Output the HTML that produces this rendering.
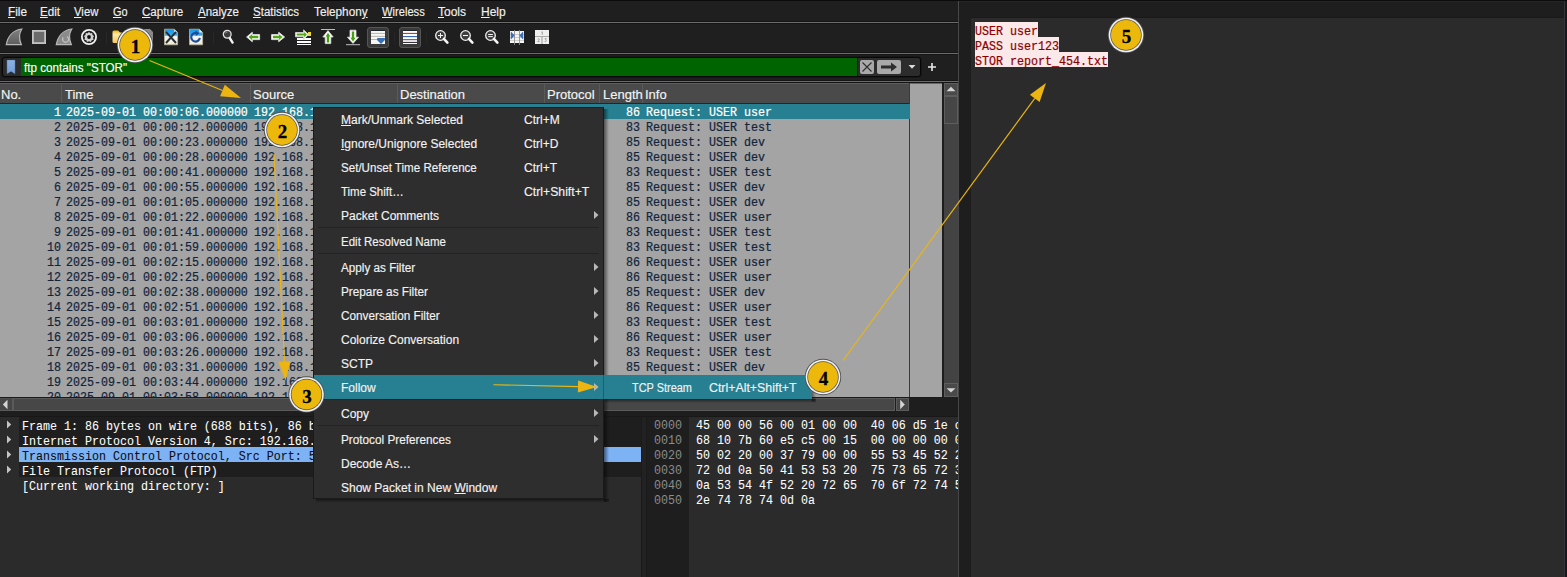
<!DOCTYPE html>
<html><head><meta charset="utf-8">
<style>
*{margin:0;padding:0;box-sizing:border-box}
html,body{width:1567px;height:577px;overflow:hidden;background:#1c1c1c;position:relative}
body{font-family:"Liberation Sans",sans-serif;font-size:12px;color:#fff}
.a{position:absolute}
.mono{font-family:"Liberation Mono",monospace;font-size:11.67px;white-space:pre;line-height:15px;transform:scaleY(1.1);transform-origin:0 0;-webkit-text-stroke:0.2px currentColor}
.ui{font-family:"Liberation Sans",sans-serif;font-size:12px;white-space:pre;line-height:15px;-webkit-text-stroke:0.15px currentColor}
u{text-decoration:underline;text-underline-offset:1px}
</style></head>
<body>

<div class="a" style="left:0px;top:0px;width:1567px;height:1px;background:#0b0b0b;"></div>
<div class="a" style="left:0px;top:1px;width:958px;height:576px;background:#1f1f1f;"></div>
<div class="a" style="left:0px;top:21px;width:958px;height:3px;background:#151515;"></div>
<div class="a" style="left:0px;top:22px;width:958px;height:1px;background:#6c6c6c;"></div>
<div class="a" style="left:0px;top:52px;width:958px;height:3px;background:#151515;"></div>
<div class="a" style="left:0px;top:53px;width:958px;height:1px;background:#6c6c6c;"></div>
<div class="a" style="left:0px;top:80px;width:958px;height:3px;background:#151515;"></div>
<div class="a" style="left:0px;top:81px;width:958px;height:1px;background:#6a6a6a;"></div>
<div class="a ui" style="left:8px;top:5px;color:#f0f0f0;transform:scaleX(0.985);transform-origin:0 0"><u>F</u>ile</div>
<div class="a ui" style="left:40px;top:5px;color:#f0f0f0;transform:scaleX(0.97);transform-origin:0 0"><u>E</u>dit</div>
<div class="a ui" style="left:74px;top:5px;color:#f0f0f0;transform:scaleX(0.945);transform-origin:0 0"><u>V</u>iew</div>
<div class="a ui" style="left:113px;top:5px;color:#f0f0f0;transform:scaleX(0.91);transform-origin:0 0"><u>G</u>o</div>
<div class="a ui" style="left:142px;top:5px;color:#f0f0f0;transform:scaleX(0.965);transform-origin:0 0"><u>C</u>apture</div>
<div class="a ui" style="left:198px;top:5px;color:#f0f0f0;transform:scaleX(0.96);transform-origin:0 0"><u>A</u>nalyze</div>
<div class="a ui" style="left:253px;top:5px;color:#f0f0f0;transform:scaleX(0.96);transform-origin:0 0"><u>S</u>tatistics</div>
<div class="a ui" style="left:314px;top:5px;color:#f0f0f0;transform:scaleX(0.98);transform-origin:0 0">Telephon<u>y</u></div>
<div class="a ui" style="left:382px;top:5px;color:#f0f0f0;transform:scaleX(0.93);transform-origin:0 0"><u>W</u>ireless</div>
<div class="a ui" style="left:438px;top:5px;color:#f0f0f0;transform:scaleX(1.0);transform-origin:0 0"><u>T</u>ools</div>
<div class="a ui" style="left:481px;top:5px;color:#f0f0f0;transform:scaleX(1.0);transform-origin:0 0"><u>H</u>elp</div>
<svg width="0" height="0" style="position:absolute"><defs><linearGradient id="gfin" x1="0" y1="0" x2="0" y2="1"><stop offset="0" stop-color="#808080"/><stop offset="1" stop-color="#5e5e5e"/></linearGradient><linearGradient id="gdoc" x1="0" y1="0" x2="0" y2="1"><stop offset="0" stop-color="#1c98e4"/><stop offset="0.38" stop-color="#38a8ee"/><stop offset="0.47" stop-color="#f4f6f4"/><stop offset="1" stop-color="#f0ecd2"/></linearGradient><linearGradient id="gfold" x1="0" y1="0" x2="0" y2="1"><stop offset="0" stop-color="#f6b400"/><stop offset="0.3" stop-color="#ffe9a8"/><stop offset="1" stop-color="#f8c85a"/></linearGradient><linearGradient id="gbm" x1="0" y1="0" x2="0" y2="1"><stop offset="0" stop-color="#8cb2e4"/><stop offset="1" stop-color="#719dd8"/></linearGradient></defs></svg>
<svg class="a" style="left:5px;top:28px" width="18" height="18" viewBox="0 0 18 18"><path d="M1.3 16.6 C2.8 8.5 8 2 16.8 1 C14.3 5 13.8 11 16.3 16.6 Z" fill="url(#gfin)" stroke="#b9b9b9" stroke-width="1.2"/></svg>
<svg class="a" style="left:31px;top:29px" width="16" height="16" viewBox="0 0 16 16"><rect x="1.9" y="1.9" width="12.2" height="12.2" fill="#6c6c6c" stroke="#c4c4c4" stroke-width="1.8"/></svg>
<svg class="a" style="left:55px;top:28px" width="18" height="18" viewBox="0 0 18 18"><path d="M1.3 16.6 C2.8 8.5 8 2 16.8 1 C14.3 5 13.8 11 16.3 16.6 Z" fill="#8a8a8a" stroke="#b9b9b9" stroke-width="1.2"/><path d="M8.2 9.5 A3 3 0 1 0 12 8.6" fill="none" stroke="#c0c0c0" stroke-width="1.3"/></svg>
<svg class="a" style="left:80px;top:28px" width="18" height="18" viewBox="0 0 18 18"><circle cx="9" cy="9" r="7.1" fill="none" stroke="#f0f0f0" stroke-width="1.8"/><path d="M9 3.8 L10.2 5.3 L12.2 5 L12.5 7 L14 8.1 L13 9.8 L13.6 11.7 L11.7 12.2 L10.8 14 L9 13.2 L7.2 14 L6.3 12.2 L4.4 11.7 L5 9.8 L4 8.1 L5.5 7 L5.8 5 L7.8 5.3 Z" fill="#d2d2d2"/><circle cx="9" cy="9" r="1.9" fill="#111"/></svg>
<div class="a" style="left:106px;top:32px;width:1px;height:12px;background:#282828;"></div>
<svg class="a" style="left:111px;top:29px" width="14" height="16" viewBox="0 0 14 16"><path d="M1.5 3 Q1.5 1.5 3 1.5 L7 1.5 L9 3.5 L11 3.5 L11 14 L3 14 Q1.5 14 1.5 12.5 Z" fill="url(#gfold)"/></svg>
<svg class="a" style="left:138px;top:28px" width="16" height="18" viewBox="0 0 16 18"><path d="M1 1 L12 1 L15 4 L15 17 L1 17 Z" fill="#8a8a8a"/></svg>
<svg class="a" style="left:163px;top:28px" width="16" height="18" viewBox="0 0 16 18"><path d="M1.5 1.2 L11.3 1.2 L14.6 4.5 L14.6 16.8 L1.5 16.8 Z" fill="url(#gdoc)" stroke="#b8b29a" stroke-width="0.8"/><path d="M11.3 1.2 L11.3 4.5 L14.6 4.5 Z" fill="#f4f2e4"/><path d="M3 3.8 L13 15 M13 3.8 L3 15" stroke="#2b3036" stroke-width="2"/></svg>
<svg class="a" style="left:188px;top:28px" width="16" height="18" viewBox="0 0 16 18"><path d="M1.5 1.2 L11.3 1.2 L14.6 4.5 L14.6 16.8 L1.5 16.8 Z" fill="url(#gdoc)" stroke="#b8b29a" stroke-width="0.8"/><path d="M11.3 1.2 L11.3 4.5 L14.6 4.5 Z" fill="#f4f2e4"/><path d="M11.8 9.8 A4.3 4.3 0 1 1 9 5.2" fill="none" stroke="#1d4c9c" stroke-width="2.2"/><path d="M7.5 2.6 L11.6 5.3 L7.8 8 Z" fill="#1d4c9c"/></svg>
<div class="a" style="left:213px;top:32px;width:1px;height:12px;background:#282828;"></div>
<svg class="a" style="left:221px;top:29px" width="16" height="17" viewBox="0 0 16 17"><circle cx="6.2" cy="5.3" r="3.9" fill="#3c3c3c" stroke="#e4e4e4" stroke-width="1.3"/><path d="M6.6 3 A2.2 2.2 0 0 0 4.2 4.6" stroke="#9a9a9a" stroke-width="0.8" fill="none"/><path d="M8.7 9 L11.6 13.6" stroke="#f4f4f4" stroke-width="2.4" stroke-linecap="round"/></svg>
<svg class="a" style="left:245px;top:30px" width="17" height="14" viewBox="0 0 17 14"><path d="M1.6 7 L7.3 2.3 L7.3 4.6 L14.6 4.6 L14.6 9.6 L7.3 9.6 L7.3 11.7 Z" fill="#fff" stroke="#d8d8d8" stroke-width="1"/><path d="M3.6 7 L7 4.2 L7 5.8 L13.3 5.8 L13.3 8.2 L7 8.2 L7 9.9 Z" fill="#50a613"/></svg>
<svg class="a" style="left:270px;top:30px" width="17" height="14" viewBox="0 0 17 14"><path d="M14.6 7 L8.7 2.3 L8.7 4.6 L1.6 4.6 L1.6 9.6 L8.7 9.6 L8.7 11.7 Z" fill="#fff" stroke="#d8d8d8" stroke-width="1"/><path d="M12.6 7 L9 4.2 L9 5.8 L2.9 5.8 L2.9 8.2 L9 8.2 L9 9.9 Z" fill="#50a613"/></svg>
<svg class="a" style="left:294px;top:29px" width="18" height="17" viewBox="0 0 18 17"><rect x="3" y="9" width="14" height="2" fill="#fff"/><rect x="3" y="12" width="14" height="2" fill="#fff"/><rect x="3" y="15" width="14" height="1" fill="#fff"/><rect x="14" y="3" width="3" height="4" fill="#f6d920"/><path d="M14.6 5.6 L9.6 0.9 L9.6 3.5 L1.5 3.5 L1.5 7.8 L9.6 7.8 L9.6 10.3 Z" fill="#fff" stroke="#d0d0d0" stroke-width="0.9"/><path d="M12.9 5.6 L10.2 3 L10.2 4.6 L2.7 4.6 L2.7 6.6 L10.2 6.6 L10.2 8.2 Z" fill="#50a613"/></svg>
<svg class="a" style="left:320px;top:28px" width="16" height="18" viewBox="0 0 16 18"><rect x="1" y="1" width="14" height="1" fill="#bdbdbd"/><path d="M8 2.6 L13.2 9 L10.8 9 L10.8 15.6 L5.2 15.6 L5.2 9 L2.8 9 Z" fill="#fff" stroke="#dcdcdc" stroke-width="0.8"/><path d="M8 4.8 L10.3 8.4 L9.2 8.4 L9.2 14.4 L6.8 14.4 L6.8 8.4 L5.7 8.4 Z" fill="#45a010"/></svg>
<svg class="a" style="left:345px;top:29px" width="16" height="18" viewBox="0 0 16 18"><rect x="1" y="15.2" width="14" height="1" fill="#bdbdbd"/><path d="M8 14.4 L13.6 8.2 L11 8.2 L11 1.2 L5 1.2 L5 8.2 L2.4 8.2 Z" fill="#fff" stroke="#dcdcdc" stroke-width="0.8"/><path d="M8 12.4 L10.6 8.8 L9.2 8.8 L9.2 2.4 L6.8 2.4 L6.8 8.8 L5.4 8.8 Z" fill="#45a010"/></svg>
<div class="a" style="left:367px;top:27px;width:22px;height:21px;background:#3a3a3a;border-radius:3px;border:1px solid #555"></div>
<svg class="a" style="left:371px;top:30px" width="14" height="14" viewBox="0 0 14 14"><rect x="0" y="0" width="14" height="1" fill="#1c262c"/><rect x="0" y="1" width="14" height="13" fill="#f6f6f4"/><rect x="0" y="2.9" width="14" height="0.9" fill="#b0b0a4"/><rect x="0" y="5.9" width="14" height="0.9" fill="#b0b0a4"/><rect x="0" y="9.1" width="14" height="0.9" fill="#b0b0a4"/><path d="M6 8.6 Q6 8 7 8 L13.5 8 Q14 8 14 8.8 L14 10 L10 14 L6 10 Z" fill="#3a6fb6"/></svg>
<div class="a" style="left:394px;top:32px;width:1px;height:12px;background:#252525;"></div>
<div class="a" style="left:399px;top:27px;width:22px;height:21px;background:#3a3a3a;border-radius:3px;border:1px solid #555"></div>
<svg class="a" style="left:403px;top:30px" width="14" height="14" viewBox="0 0 14 14"><rect x="0" y="0" width="14" height="1" fill="#1c262c"/><rect x="0" y="1" width="14" height="13" fill="#fbfbf8"/><rect x="0" y="2.9" width="14" height="1.1" fill="#e82a2a"/><rect x="0" y="6" width="14" height="1.1" fill="#3866b0"/><rect x="0" y="9.1" width="14" height="1.1" fill="#7a4c8e"/><rect x="0" y="11.9" width="14" height="1" fill="#1e2226"/></svg>
<div class="a" style="left:426px;top:32px;width:1px;height:12px;background:#252525;"></div>
<svg class="a" style="left:434px;top:29px" width="17" height="16" viewBox="0 0 17 16"><circle cx="6.5" cy="6.5" r="4.8" fill="#3c3c3c" stroke="#f0f0f0" stroke-width="1.3"/><path d="M9.9 9.9 L13.4 13.6" stroke="#f6f6f6" stroke-width="2.6" stroke-linecap="round"/><path d="M6.5 4 V9 M4 6.5 H9" stroke="#f4f4f4" stroke-width="1"/></svg>
<svg class="a" style="left:459px;top:29px" width="17" height="16" viewBox="0 0 17 16"><circle cx="6.5" cy="6.5" r="4.8" fill="#3c3c3c" stroke="#f0f0f0" stroke-width="1.3"/><path d="M9.9 9.9 L13.4 13.6" stroke="#f6f6f6" stroke-width="2.6" stroke-linecap="round"/><path d="M4 6.5 H9" stroke="#f4f4f4" stroke-width="1.1"/></svg>
<svg class="a" style="left:484px;top:29px" width="17" height="16" viewBox="0 0 17 16"><circle cx="6.5" cy="6.5" r="4.8" fill="#3c3c3c" stroke="#f0f0f0" stroke-width="1.3"/><path d="M9.9 9.9 L13.4 13.6" stroke="#f6f6f6" stroke-width="2.6" stroke-linecap="round"/><path d="M4.2 5.5 H8.8 M4.2 7.6 H8.8" stroke="#f4f4f4" stroke-width="1"/></svg>
<svg class="a" style="left:509px;top:29px" width="16" height="16" viewBox="0 0 16 16"><rect x="1" y="2" width="14" height="12" fill="#f4f4f4"/><path d="M1 5.5 H15 M1 8.5 H15 M1 11.5 H15" stroke="#c4c4bc" stroke-width="0.8"/><path d="M5.5 1 V16 M10.5 1 V16" stroke="#8e8e8e" stroke-width="0.9"/><path d="M1.8 3 Q1.8 2.6 2.4 2.9 L5.6 6.5 L2.4 10.1 Q1.8 10.4 1.8 10 Z M14.2 3 Q14.2 2.6 13.6 2.9 L10.4 6.5 L13.6 10.1 Q14.2 10.4 14.2 10 Z" fill="#3a6ebc"/></svg>
<svg class="a" style="left:534px;top:29px" width="16" height="16" viewBox="0 0 16 16"><rect x="1" y="1" width="14" height="14" fill="#f0f0f0"/><path d="M1 7.5 H15 M8 7.5 V15" stroke="#a8a8a4" stroke-width="1.2"/><path d="M7.6 3.2 L8.3 2.8 L8.3 5.8" stroke="#7a7a7a" stroke-width="0.7" fill="none"/><path d="M3.6 10.3 Q4.6 9.3 5.4 10.2 Q5.4 11 3.6 12.6 L5.6 12.6" stroke="#8a8a8a" stroke-width="0.7" fill="none"/><path d="M10.6 9.6 L12.4 9.6 L11.4 10.8 Q12.6 11 12.2 12.2 Q11.6 13 10.6 12.4" stroke="#8a8a8a" stroke-width="0.7" fill="none"/></svg>
<div class="a" style="left:2px;top:57px;width:919px;height:20px;background:#2c2c2c;border:1px solid #080808;border-radius:3px;box-shadow:0 0 0 0.5px #111"></div>
<div class="a" style="left:21px;top:58px;width:836px;height:18px;background:#006400;"></div>
<div class="a" style="left:857px;top:58px;width:1px;height:18px;background:#111;"></div>
<svg class="a" style="left:6px;top:59px" width="12" height="16" viewBox="0 0 12 16"><path d="M0.9 0.9 L9.1 0.9 L9.1 15 L5 12.6 L0.9 15 Z" fill="url(#gbm)" stroke="#3a4a5a" stroke-width="0.3"/></svg>
<div class="a ui" style="left:24px;top:61px;color:#ffffff;transform:scaleX(0.97);transform-origin:0 0">ftp contains "STOR"</div>
<div class="a" style="left:860px;top:60px;width:14px;height:14px;background:#a9a9a9;border-radius:2px"></div>
<svg class="a" style="left:860px;top:60px" width="14" height="14" viewBox="0 0 14 14"><path d="M2.5 2.5 L11.5 11.5 M11.5 2.5 L2.5 11.5" stroke="#2e2e2e" stroke-width="1.1"/></svg>
<div class="a" style="left:877px;top:60px;width:24px;height:14px;background:#a9a9a9;border-radius:2px"></div>
<svg class="a" style="left:877px;top:60px" width="24" height="14" viewBox="0 0 24 14"><path d="M4 5.5 L14 5.5 L14 2.5 L20 7 L14 11.5 L14 8.5 L4 8.5 Z" fill="#2e2e2e"/></svg>
<svg class="a" style="left:906px;top:62px" width="12" height="8" viewBox="0 0 12 8"><path d="M2.5 3 L9.5 3 L6 6.8 Z" fill="#dddddd"/></svg>
<svg class="a" style="left:926px;top:61px" width="12" height="12" viewBox="0 0 12 12"><path d="M6 2 V10 M2 6 H10" stroke="#e8e8e8" stroke-width="1.6"/></svg>
<div class="a" style="left:0px;top:83px;width:910px;height:20px;background:#4a4a4a;"></div>
<div class="a" style="left:0px;top:83px;width:910px;height:1px;background:#5e5e5e;"></div>
<div class="a" style="left:0px;top:103px;width:910px;height:1px;background:#262626;"></div>
<div class="a" style="left:0px;top:104px;width:943px;height:293px;background:#a4a4a4;"></div>
<div class="a" style="left:910px;top:83px;width:33px;height:21px;background:#a4a4a4;"></div>
<div class="a" style="left:910px;top:83px;width:33px;height:1px;background:#268092;"></div>
<div class="a" style="left:909px;top:83px;width:1px;height:314px;background:#3a3a3a;"></div>
<div class="a" style="left:61px;top:83px;width:1px;height:20px;background:#5a5a5a;"></div>
<div class="a" style="left:250px;top:83px;width:1px;height:20px;background:#5a5a5a;"></div>
<div class="a" style="left:397px;top:83px;width:1px;height:20px;background:#5a5a5a;"></div>
<div class="a" style="left:544px;top:83px;width:1px;height:20px;background:#5a5a5a;"></div>
<div class="a" style="left:599px;top:83px;width:1px;height:20px;background:#5a5a5a;"></div>
<div class="a" style="left:642px;top:83px;width:1px;height:20px;background:#5a5a5a;"></div>
<div class="a ui" style="left:1px;top:87px;color:#f4f4f4;font-size:13px">No.</div>
<div class="a ui" style="left:65px;top:87px;color:#f4f4f4;font-size:13px">Time</div>
<div class="a ui" style="left:253px;top:87px;color:#f4f4f4;font-size:13px">Source</div>
<div class="a ui" style="left:400px;top:87px;color:#f4f4f4;font-size:13px">Destination</div>
<div class="a ui" style="left:547px;top:87px;color:#f4f4f4;font-size:13px">Protocol</div>
<div class="a ui" style="left:603px;top:87px;color:#f4f4f4;font-size:13px">Length</div>
<div class="a ui" style="left:645px;top:87px;color:#f4f4f4;font-size:13px">Info</div>
<div class="a" style="left:0px;top:104px;width:910px;height:15px;background:#268092;"></div>
<div class="a" style="left:0;top:104px;width:909px;height:293px;overflow:hidden">
<div class="a mono" style="left:54px;top:1px;color:#ffffff">1</div>
<div class="a mono" style="left:66px;top:1px;color:#ffffff">2025-09-01 00:00:06.000000</div>
<div class="a mono" style="left:254px;top:1px;color:#ffffff">192.168.1.10</div>
<div class="a mono" style="left:401px;top:1px;color:#ffffff">192.168.1.20</div>
<div class="a mono" style="left:548px;top:1px;color:#ffffff">FTP</div>
<div class="a mono" style="left:626px;top:1px;color:#ffffff">86</div>
<div class="a mono" style="left:646px;top:1px;color:#ffffff">Request: USER user</div>
<div class="a mono" style="left:54px;top:16px;color:#12233a">2</div>
<div class="a mono" style="left:66px;top:16px;color:#12233a">2025-09-01 00:00:12.000000</div>
<div class="a mono" style="left:254px;top:16px;color:#12233a">192.168.1.10</div>
<div class="a mono" style="left:401px;top:16px;color:#12233a">192.168.1.20</div>
<div class="a mono" style="left:548px;top:16px;color:#12233a">FTP</div>
<div class="a mono" style="left:626px;top:16px;color:#12233a">83</div>
<div class="a mono" style="left:646px;top:16px;color:#12233a">Request: USER test</div>
<div class="a mono" style="left:54px;top:31px;color:#12233a">3</div>
<div class="a mono" style="left:66px;top:31px;color:#12233a">2025-09-01 00:00:23.000000</div>
<div class="a mono" style="left:254px;top:31px;color:#12233a">192.168.1.10</div>
<div class="a mono" style="left:401px;top:31px;color:#12233a">192.168.1.20</div>
<div class="a mono" style="left:548px;top:31px;color:#12233a">FTP</div>
<div class="a mono" style="left:626px;top:31px;color:#12233a">85</div>
<div class="a mono" style="left:646px;top:31px;color:#12233a">Request: USER dev</div>
<div class="a mono" style="left:54px;top:46px;color:#12233a">4</div>
<div class="a mono" style="left:66px;top:46px;color:#12233a">2025-09-01 00:00:28.000000</div>
<div class="a mono" style="left:254px;top:46px;color:#12233a">192.168.1.10</div>
<div class="a mono" style="left:401px;top:46px;color:#12233a">192.168.1.20</div>
<div class="a mono" style="left:548px;top:46px;color:#12233a">FTP</div>
<div class="a mono" style="left:626px;top:46px;color:#12233a">85</div>
<div class="a mono" style="left:646px;top:46px;color:#12233a">Request: USER dev</div>
<div class="a mono" style="left:54px;top:61px;color:#12233a">5</div>
<div class="a mono" style="left:66px;top:61px;color:#12233a">2025-09-01 00:00:41.000000</div>
<div class="a mono" style="left:254px;top:61px;color:#12233a">192.168.1.10</div>
<div class="a mono" style="left:401px;top:61px;color:#12233a">192.168.1.20</div>
<div class="a mono" style="left:548px;top:61px;color:#12233a">FTP</div>
<div class="a mono" style="left:626px;top:61px;color:#12233a">83</div>
<div class="a mono" style="left:646px;top:61px;color:#12233a">Request: USER test</div>
<div class="a mono" style="left:54px;top:76px;color:#12233a">6</div>
<div class="a mono" style="left:66px;top:76px;color:#12233a">2025-09-01 00:00:55.000000</div>
<div class="a mono" style="left:254px;top:76px;color:#12233a">192.168.1.10</div>
<div class="a mono" style="left:401px;top:76px;color:#12233a">192.168.1.20</div>
<div class="a mono" style="left:548px;top:76px;color:#12233a">FTP</div>
<div class="a mono" style="left:626px;top:76px;color:#12233a">85</div>
<div class="a mono" style="left:646px;top:76px;color:#12233a">Request: USER dev</div>
<div class="a mono" style="left:54px;top:91px;color:#12233a">7</div>
<div class="a mono" style="left:66px;top:91px;color:#12233a">2025-09-01 00:01:05.000000</div>
<div class="a mono" style="left:254px;top:91px;color:#12233a">192.168.1.10</div>
<div class="a mono" style="left:401px;top:91px;color:#12233a">192.168.1.20</div>
<div class="a mono" style="left:548px;top:91px;color:#12233a">FTP</div>
<div class="a mono" style="left:626px;top:91px;color:#12233a">85</div>
<div class="a mono" style="left:646px;top:91px;color:#12233a">Request: USER dev</div>
<div class="a mono" style="left:54px;top:106px;color:#12233a">8</div>
<div class="a mono" style="left:66px;top:106px;color:#12233a">2025-09-01 00:01:22.000000</div>
<div class="a mono" style="left:254px;top:106px;color:#12233a">192.168.1.10</div>
<div class="a mono" style="left:401px;top:106px;color:#12233a">192.168.1.20</div>
<div class="a mono" style="left:548px;top:106px;color:#12233a">FTP</div>
<div class="a mono" style="left:626px;top:106px;color:#12233a">86</div>
<div class="a mono" style="left:646px;top:106px;color:#12233a">Request: USER user</div>
<div class="a mono" style="left:54px;top:121px;color:#12233a">9</div>
<div class="a mono" style="left:66px;top:121px;color:#12233a">2025-09-01 00:01:41.000000</div>
<div class="a mono" style="left:254px;top:121px;color:#12233a">192.168.1.10</div>
<div class="a mono" style="left:401px;top:121px;color:#12233a">192.168.1.20</div>
<div class="a mono" style="left:548px;top:121px;color:#12233a">FTP</div>
<div class="a mono" style="left:626px;top:121px;color:#12233a">83</div>
<div class="a mono" style="left:646px;top:121px;color:#12233a">Request: USER test</div>
<div class="a mono" style="left:47px;top:136px;color:#12233a">10</div>
<div class="a mono" style="left:66px;top:136px;color:#12233a">2025-09-01 00:01:59.000000</div>
<div class="a mono" style="left:254px;top:136px;color:#12233a">192.168.1.10</div>
<div class="a mono" style="left:401px;top:136px;color:#12233a">192.168.1.20</div>
<div class="a mono" style="left:548px;top:136px;color:#12233a">FTP</div>
<div class="a mono" style="left:626px;top:136px;color:#12233a">83</div>
<div class="a mono" style="left:646px;top:136px;color:#12233a">Request: USER test</div>
<div class="a mono" style="left:47px;top:151px;color:#12233a">11</div>
<div class="a mono" style="left:66px;top:151px;color:#12233a">2025-09-01 00:02:15.000000</div>
<div class="a mono" style="left:254px;top:151px;color:#12233a">192.168.1.10</div>
<div class="a mono" style="left:401px;top:151px;color:#12233a">192.168.1.20</div>
<div class="a mono" style="left:548px;top:151px;color:#12233a">FTP</div>
<div class="a mono" style="left:626px;top:151px;color:#12233a">86</div>
<div class="a mono" style="left:646px;top:151px;color:#12233a">Request: USER user</div>
<div class="a mono" style="left:47px;top:166px;color:#12233a">12</div>
<div class="a mono" style="left:66px;top:166px;color:#12233a">2025-09-01 00:02:25.000000</div>
<div class="a mono" style="left:254px;top:166px;color:#12233a">192.168.1.10</div>
<div class="a mono" style="left:401px;top:166px;color:#12233a">192.168.1.20</div>
<div class="a mono" style="left:548px;top:166px;color:#12233a">FTP</div>
<div class="a mono" style="left:626px;top:166px;color:#12233a">86</div>
<div class="a mono" style="left:646px;top:166px;color:#12233a">Request: USER user</div>
<div class="a mono" style="left:47px;top:181px;color:#12233a">13</div>
<div class="a mono" style="left:66px;top:181px;color:#12233a">2025-09-01 00:02:38.000000</div>
<div class="a mono" style="left:254px;top:181px;color:#12233a">192.168.1.10</div>
<div class="a mono" style="left:401px;top:181px;color:#12233a">192.168.1.20</div>
<div class="a mono" style="left:548px;top:181px;color:#12233a">FTP</div>
<div class="a mono" style="left:626px;top:181px;color:#12233a">85</div>
<div class="a mono" style="left:646px;top:181px;color:#12233a">Request: USER dev</div>
<div class="a mono" style="left:47px;top:196px;color:#12233a">14</div>
<div class="a mono" style="left:66px;top:196px;color:#12233a">2025-09-01 00:02:51.000000</div>
<div class="a mono" style="left:254px;top:196px;color:#12233a">192.168.1.10</div>
<div class="a mono" style="left:401px;top:196px;color:#12233a">192.168.1.20</div>
<div class="a mono" style="left:548px;top:196px;color:#12233a">FTP</div>
<div class="a mono" style="left:626px;top:196px;color:#12233a">86</div>
<div class="a mono" style="left:646px;top:196px;color:#12233a">Request: USER user</div>
<div class="a mono" style="left:47px;top:211px;color:#12233a">15</div>
<div class="a mono" style="left:66px;top:211px;color:#12233a">2025-09-01 00:03:01.000000</div>
<div class="a mono" style="left:254px;top:211px;color:#12233a">192.168.1.10</div>
<div class="a mono" style="left:401px;top:211px;color:#12233a">192.168.1.20</div>
<div class="a mono" style="left:548px;top:211px;color:#12233a">FTP</div>
<div class="a mono" style="left:626px;top:211px;color:#12233a">83</div>
<div class="a mono" style="left:646px;top:211px;color:#12233a">Request: USER test</div>
<div class="a mono" style="left:47px;top:226px;color:#12233a">16</div>
<div class="a mono" style="left:66px;top:226px;color:#12233a">2025-09-01 00:03:06.000000</div>
<div class="a mono" style="left:254px;top:226px;color:#12233a">192.168.1.10</div>
<div class="a mono" style="left:401px;top:226px;color:#12233a">192.168.1.20</div>
<div class="a mono" style="left:548px;top:226px;color:#12233a">FTP</div>
<div class="a mono" style="left:626px;top:226px;color:#12233a">86</div>
<div class="a mono" style="left:646px;top:226px;color:#12233a">Request: USER user</div>
<div class="a mono" style="left:47px;top:241px;color:#12233a">17</div>
<div class="a mono" style="left:66px;top:241px;color:#12233a">2025-09-01 00:03:26.000000</div>
<div class="a mono" style="left:254px;top:241px;color:#12233a">192.168.1.10</div>
<div class="a mono" style="left:401px;top:241px;color:#12233a">192.168.1.20</div>
<div class="a mono" style="left:548px;top:241px;color:#12233a">FTP</div>
<div class="a mono" style="left:626px;top:241px;color:#12233a">83</div>
<div class="a mono" style="left:646px;top:241px;color:#12233a">Request: USER test</div>
<div class="a mono" style="left:47px;top:256px;color:#12233a">18</div>
<div class="a mono" style="left:66px;top:256px;color:#12233a">2025-09-01 00:03:31.000000</div>
<div class="a mono" style="left:254px;top:256px;color:#12233a">192.168.1.10</div>
<div class="a mono" style="left:401px;top:256px;color:#12233a">192.168.1.20</div>
<div class="a mono" style="left:548px;top:256px;color:#12233a">FTP</div>
<div class="a mono" style="left:626px;top:256px;color:#12233a">85</div>
<div class="a mono" style="left:646px;top:256px;color:#12233a">Request: USER dev</div>
<div class="a mono" style="left:47px;top:271px;color:#12233a">19</div>
<div class="a mono" style="left:66px;top:271px;color:#12233a">2025-09-01 00:03:44.000000</div>
<div class="a mono" style="left:254px;top:271px;color:#12233a">192.168.1.10</div>
<div class="a mono" style="left:401px;top:271px;color:#12233a">192.168.1.20</div>
<div class="a mono" style="left:548px;top:271px;color:#12233a">FTP</div>
<div class="a mono" style="left:626px;top:271px;color:#12233a">86</div>
<div class="a mono" style="left:646px;top:271px;color:#12233a">Request: USER user</div>
<div class="a mono" style="left:47px;top:286px;color:#12233a">20</div>
<div class="a mono" style="left:66px;top:286px;color:#12233a">2025-09-01 00:03:58.000000</div>
<div class="a mono" style="left:254px;top:286px;color:#12233a">192.168.1.10</div>
<div class="a mono" style="left:401px;top:286px;color:#12233a">192.168.1.20</div>
<div class="a mono" style="left:548px;top:286px;color:#12233a">FTP</div>
<div class="a mono" style="left:626px;top:286px;color:#12233a">86</div>
<div class="a mono" style="left:646px;top:286px;color:#12233a">Request: USER user</div>
</div>
<div class="a" style="left:942px;top:83px;width:16px;height:314px;background:#434343;"></div>
<div class="a" style="left:942px;top:83px;width:2px;height:314px;background:#1e1e1e;"></div>
<div class="a" style="left:944px;top:83px;width:14px;height:13px;background:#4a4a4a;border:1px solid #5e5e5e"></div>
<div class="a" style="left:944px;top:96px;width:14px;height:28px;background:#464646;border:1px solid #5e5e5e"></div>
<div class="a" style="left:944px;top:383px;width:14px;height:14px;background:#4a4a4a;border:1px solid #5e5e5e"></div>
<svg class="a" style="left:944px;top:83px" width="14" height="13"><path d="M2.5 8.2 L7 3.8 L11.5 8.2 Z" fill="#d4d4d4"/></svg>
<svg class="a" style="left:944px;top:383px" width="14" height="14"><path d="M2.5 5.2 L7 9.6 L11.5 5.2 Z" fill="#d4d4d4"/></svg>
<div class="a" style="left:0px;top:397px;width:958px;height:20px;background:#1e1e1e;"></div>
<div class="a" style="left:0px;top:397px;width:943px;height:1px;background:#1a1a1a;"></div>
<div class="a" style="left:0px;top:398px;width:13px;height:13px;background:#464646;border:1px solid #5a5a5a;border-left:none;border-top-color:#4e4e4e"></div>
<div class="a" style="left:13px;top:398px;width:882px;height:13px;background:#474747;border:1px solid #5a5a5a"></div>
<div class="a" style="left:896px;top:398px;width:13px;height:13px;background:#474747;border:1px solid #5c5c5c"></div>
<svg class="a" style="left:0px;top:398px" width="13" height="13"><path d="M7.5 1.8 L2.8 6.5 L7.5 11.2 Z" fill="#d4d4d4"/></svg>
<svg class="a" style="left:896px;top:398px" width="14" height="13"><path d="M4.2 1.8 L8.8 6.5 L4.2 11.2 Z" fill="#d4d4d4"/></svg>
<div class="a" style="left:0px;top:416px;width:958px;height:1px;background:#181818;"></div>
<div class="a" style="left:0px;top:417px;width:641px;height:160px;background:#2b2b2b;"></div>
<div class="a" style="left:19px;top:417px;width:622px;height:60px;background:#1e1e1e;"></div>
<div class="a" style="left:19px;top:447px;width:622px;height:15px;background:#7db2f5;"></div>
<div class="a" style="left:0;top:417px;width:641px;height:160px;overflow:hidden">
<div class="a mono" style="left:22px;top:1.5px;color:#ffffff;-webkit-text-stroke:0.05px #ffffff">Frame 1: 86 bytes on wire (688 bits), 86 bytes captured (688 bits) on interface</div>
<svg class="a" style="left:0px;top:0px" width="12" height="15"><path d="M7 3.6 L11.2 7.5 L7 11.4 Z" fill="#c4c4c4"/></svg>
<div class="a mono" style="left:22px;top:16.5px;color:#ffffff;-webkit-text-stroke:0.05px #ffffff">Internet Protocol Version 4, Src: 192.168.1.10, Dst: 192.168.1.20</div>
<svg class="a" style="left:0px;top:15px" width="12" height="15"><path d="M7 3.6 L11.2 7.5 L7 11.4 Z" fill="#c4c4c4"/></svg>
<div class="a mono" style="left:22px;top:31.5px;color:#0b0b0b;-webkit-text-stroke:0.05px #0b0b0b">Transmission Control Protocol, Src Port: 50001, Dst Port: 21, Seq: 1</div>
<svg class="a" style="left:0px;top:30px" width="12" height="15"><path d="M7 3.6 L11.2 7.5 L7 11.4 Z" fill="#c4c4c4"/></svg>
<div class="a mono" style="left:22px;top:46.5px;color:#ffffff;-webkit-text-stroke:0.05px #ffffff">File Transfer Protocol (FTP)</div>
<svg class="a" style="left:0px;top:45px" width="12" height="15"><path d="M7 3.6 L11.2 7.5 L7 11.4 Z" fill="#c4c4c4"/></svg>
<div class="a mono" style="left:22px;top:61.5px;color:#ffffff;-webkit-text-stroke:0.05px #ffffff">[Current working directory: ]</div>
</div>
<div class="a" style="left:641px;top:417px;width:6px;height:160px;background:#222222;"></div>
<div class="a" style="left:641px;top:417px;width:1px;height:160px;background:#1a1a1a;"></div>
<div class="a" style="left:646px;top:417px;width:1px;height:160px;background:#1a1a1a;"></div>
<div class="a" style="left:647px;top:417px;width:42px;height:160px;background:#1e1e1e;"></div>
<div class="a" style="left:689px;top:417px;width:269px;height:160px;background:#2b2b2b;"></div>
<div class="a" style="left:647px;top:417px;width:311px;height:160px;overflow:hidden">
<div class="a mono" style="left:7px;top:1px;color:#8c8c8c;-webkit-text-stroke:0">0000</div>
<div class="a mono" style="left:49px;top:1px;color:#ffffff;-webkit-text-stroke:0.05px #fff">45 00 00 56 00 01 00 00  40 06 d5 1e c0 a8 01 0a</div>
<div class="a mono" style="left:7px;top:16px;color:#8c8c8c;-webkit-text-stroke:0">0010</div>
<div class="a mono" style="left:49px;top:16px;color:#ffffff;-webkit-text-stroke:0.05px #fff">68 10 7b 60 e5 c5 00 15  00 00 00 00 00 00 00 00</div>
<div class="a mono" style="left:7px;top:31px;color:#8c8c8c;-webkit-text-stroke:0">0020</div>
<div class="a mono" style="left:49px;top:31px;color:#ffffff;-webkit-text-stroke:0.05px #fff">50 02 20 00 37 79 00 00  55 53 45 52 20 75 73 65</div>
<div class="a mono" style="left:7px;top:46px;color:#8c8c8c;-webkit-text-stroke:0">0030</div>
<div class="a mono" style="left:49px;top:46px;color:#ffffff;-webkit-text-stroke:0.05px #fff">72 0d 0a 50 41 53 53 20  75 73 65 72 31 32 33 0d</div>
<div class="a mono" style="left:7px;top:61px;color:#8c8c8c;-webkit-text-stroke:0">0040</div>
<div class="a mono" style="left:49px;top:61px;color:#ffffff;-webkit-text-stroke:0.05px #fff">0a 53 54 4f 52 20 72 65  70 6f 72 74 5f 34 35 34</div>
<div class="a mono" style="left:7px;top:76px;color:#8c8c8c;-webkit-text-stroke:0">0050</div>
<div class="a mono" style="left:49px;top:76px;color:#ffffff;-webkit-text-stroke:0.05px #fff">2e 74 78 74 0d 0a</div>
</div>
<div class="a" style="left:958px;top:1px;width:1px;height:576px;background:#474747;"></div>
<div class="a" style="left:959px;top:1px;width:608px;height:576px;background:#1e1e1e;"></div>
<div class="a" style="left:971px;top:17px;width:593px;height:560px;background:#2b2b2b;"></div>
<div class="a" style="left:971px;top:17px;width:593px;height:1px;background:#1a1a1a;"></div>
<div class="a" style="left:959px;top:1px;width:608px;height:1px;background:#242424;"></div>
<div class="a" style="left:975px;top:22px;width:63px;height:15px;background:#fbe9ea;"></div>
<div class="a mono" style="left:975px;top:24px;color:#8b0000">USER user</div>
<div class="a" style="left:975px;top:37px;width:84px;height:15px;background:#fbe9ea;"></div>
<div class="a mono" style="left:975px;top:39px;color:#8b0000">PASS user123</div>
<div class="a" style="left:975px;top:52px;width:133px;height:15px;background:#fbe9ea;"></div>
<div class="a mono" style="left:975px;top:54px;color:#8b0000">STOR report_454.txt</div>
<div class="a" style="left:1564px;top:1px;width:3px;height:576px;background:#181818;"></div>
<div class="a" style="left:1564px;top:1px;width:1px;height:576px;background:#36363a;"></div>
<div class="a" style="left:604px;top:109px;width:5px;height:393px;background:linear-gradient(to right,rgba(0,0,0,0.5),rgba(0,0,0,0));"></div>
<div class="a" style="left:316px;top:499px;width:293px;height:4px;background:linear-gradient(to bottom,rgba(0,0,0,0.45),rgba(0,0,0,0));"></div>
<div class="a" style="left:313px;top:107px;width:291px;height:392px;background:#2e2e2e;border:1px solid #1a1a1a"></div>
<div class="a ui" style="left:341px;top:113px;color:#f2f2f2;"><u>M</u>ark/Unmark Selected</div>
<div class="a ui" style="left:524px;top:113px;color:#f2f2f2;">Ctrl+M</div>
<div class="a ui" style="left:341px;top:137px;color:#f2f2f2;"><u>I</u>gnore/Unignore Selected</div>
<div class="a ui" style="left:524px;top:137px;color:#f2f2f2;">Ctrl+D</div>
<div class="a ui" style="left:341px;top:161px;color:#f2f2f2;transform:scaleX(0.965);transform-origin:0 0">Set/Unset Time Reference</div>
<div class="a ui" style="left:524px;top:161px;color:#f2f2f2;">Ctrl+T</div>
<div class="a ui" style="left:341px;top:185px;color:#f2f2f2;transform:scaleX(0.955);transform-origin:0 0">Time Shift…</div>
<div class="a ui" style="left:524px;top:185px;color:#f2f2f2;transform:scaleX(1.02);transform-origin:0 0">Ctrl+Shift+T</div>
<div class="a ui" style="left:341px;top:209px;color:#f2f2f2;">Packet Comments</div>
<svg class="a" style="left:592px;top:209px" width="8" height="12"><path d="M2 2 L6.5 6 L2 10 Z" fill="#b8b8b8"/></svg>
<div class="a" style="left:318px;top:227px;width:281px;height:1px;background:#232323;"></div>
<div class="a ui" style="left:341px;top:235px;color:#f2f2f2;transform:scaleX(0.96);transform-origin:0 0">Edit Resolved Name</div>
<div class="a" style="left:318px;top:253px;width:281px;height:1px;background:#232323;"></div>
<div class="a ui" style="left:341px;top:261px;color:#f2f2f2;transform:scaleX(0.975);transform-origin:0 0">Apply as Filter</div>
<svg class="a" style="left:592px;top:261px" width="8" height="12"><path d="M2 2 L6.5 6 L2 10 Z" fill="#b8b8b8"/></svg>
<div class="a ui" style="left:341px;top:285px;color:#f2f2f2;transform:scaleX(0.98);transform-origin:0 0">Prepare as Filter</div>
<svg class="a" style="left:592px;top:285px" width="8" height="12"><path d="M2 2 L6.5 6 L2 10 Z" fill="#b8b8b8"/></svg>
<div class="a ui" style="left:341px;top:309px;color:#f2f2f2;transform:scaleX(0.98);transform-origin:0 0">Conversation Filter</div>
<svg class="a" style="left:592px;top:309px" width="8" height="12"><path d="M2 2 L6.5 6 L2 10 Z" fill="#b8b8b8"/></svg>
<div class="a ui" style="left:341px;top:333px;color:#f2f2f2;">Colorize Conversation</div>
<svg class="a" style="left:592px;top:333px" width="8" height="12"><path d="M2 2 L6.5 6 L2 10 Z" fill="#b8b8b8"/></svg>
<div class="a ui" style="left:341px;top:357px;color:#f2f2f2;">SCTP</div>
<svg class="a" style="left:592px;top:357px" width="8" height="12"><path d="M2 2 L6.5 6 L2 10 Z" fill="#b8b8b8"/></svg>
<div class="a" style="left:314px;top:375px;width:289px;height:24px;background:#268092;"></div>
<div class="a ui" style="left:341px;top:381px;color:#f2f2f2;">Follow</div>
<svg class="a" style="left:592px;top:381px" width="8" height="12"><path d="M2 2 L6.5 6 L2 10 Z" fill="#b8b8b8"/></svg>
<div class="a" style="left:318px;top:399px;width:281px;height:1px;background:#232323;"></div>
<div class="a ui" style="left:341px;top:407px;color:#f2f2f2;">Copy</div>
<svg class="a" style="left:592px;top:407px" width="8" height="12"><path d="M2 2 L6.5 6 L2 10 Z" fill="#b8b8b8"/></svg>
<div class="a" style="left:318px;top:425px;width:281px;height:1px;background:#232323;"></div>
<div class="a ui" style="left:341px;top:433px;color:#f2f2f2;transform:scaleX(0.98);transform-origin:0 0">Protocol Preferences</div>
<svg class="a" style="left:592px;top:433px" width="8" height="12"><path d="M2 2 L6.5 6 L2 10 Z" fill="#b8b8b8"/></svg>
<div class="a ui" style="left:341px;top:457px;color:#f2f2f2;">Decode As…</div>
<div class="a ui" style="left:341px;top:481px;color:#f2f2f2;">Show Packet in New <u>W</u>indow</div>
<div class="a" style="left:812px;top:377px;width:4px;height:25px;background:linear-gradient(to right,rgba(0,0,0,0.45),rgba(0,0,0,0));"></div>
<div class="a" style="left:605px;top:399px;width:211px;height:4px;background:linear-gradient(to bottom,rgba(0,0,0,0.5),rgba(0,0,0,0));"></div>
<div class="a" style="left:603px;top:375px;width:209px;height:24px;background:#268092;"></div>
<div class="a" style="left:603px;top:375px;width:1px;height:24px;background:#1f5f6c;"></div>
<div class="a ui" style="left:632px;top:381px;color:#f2f2f2;transform:scaleX(0.91);transform-origin:0 0">TCP Stream</div>
<div class="a ui" style="left:709px;top:381px;color:#f2f2f2;transform:scaleX(1.03);transform-origin:0 0">Ctrl+Alt+Shift+T</div>
<svg class="a" style="left:0;top:0" width="1567" height="577">
<line x1="149.5" y1="60.5" x2="222.49389722678657" y2="90.41553165032236" stroke="#ecb512" stroke-width="1.15"/>
<path d="M241 98 L220.1 96.2 L224.8 84.7 Z" fill="#ecb512"/>
<line x1="274" y1="154" x2="284.5365610941684" y2="361.5244424199253" stroke="#ecb512" stroke-width="1.15"/>
<path d="M285.5 380.5 L278.5 361.8 L290.5 361.2 Z" fill="#ecb512"/>
<line x1="493.5" y1="384.7" x2="578.0046896211994" y2="386.5778819915822" stroke="#ecb512" stroke-width="1.15"/>
<path d="M597 387 L577.9 392.6 L578.1 380.6 Z" fill="#ecb512"/>
<line x1="843" y1="360.5" x2="1034.7820658494684" y2="98.33486072301727" stroke="#ecb512" stroke-width="1.15"/>
<path d="M1046 83 L1039.6 101.9 L1029.9 94.8 Z" fill="#ecb512"/>
<circle cx="135" cy="45" r="18.2" fill="#505050"/>
<circle cx="135" cy="45" r="17.3" fill="#f2f2f2"/>
<circle cx="135" cy="45" r="15.7" fill="#505050"/>
<circle cx="135" cy="45" r="15" fill="#ecb80c"/>
<text x="135.5" y="53.2" text-anchor="middle" font-family="Liberation Serif" font-weight="bold" font-size="19" stroke="#000" stroke-width="0.3" fill="#000">1</text>
<circle cx="282" cy="130" r="18.2" fill="#505050"/>
<circle cx="282" cy="130" r="17.3" fill="#f2f2f2"/>
<circle cx="282" cy="130" r="15.7" fill="#505050"/>
<circle cx="282" cy="130" r="15" fill="#ecb80c"/>
<text x="282.5" y="138.2" text-anchor="middle" font-family="Liberation Serif" font-weight="bold" font-size="19" stroke="#000" stroke-width="0.3" fill="#000">2</text>
<circle cx="306.5" cy="394.5" r="18.2" fill="#505050"/>
<circle cx="306.5" cy="394.5" r="17.3" fill="#f2f2f2"/>
<circle cx="306.5" cy="394.5" r="15.7" fill="#505050"/>
<circle cx="306.5" cy="394.5" r="15" fill="#ecb80c"/>
<text x="307.0" y="402.7" text-anchor="middle" font-family="Liberation Serif" font-weight="bold" font-size="19" stroke="#000" stroke-width="0.3" fill="#000">3</text>
<circle cx="823" cy="377" r="18.2" fill="#505050"/>
<circle cx="823" cy="377" r="17.3" fill="#f2f2f2"/>
<circle cx="823" cy="377" r="15.7" fill="#505050"/>
<circle cx="823" cy="377" r="15" fill="#ecb80c"/>
<text x="823.5" y="385.2" text-anchor="middle" font-family="Liberation Serif" font-weight="bold" font-size="19" stroke="#000" stroke-width="0.3" fill="#000">4</text>
<circle cx="1126" cy="35" r="18.2" fill="#505050"/>
<circle cx="1126" cy="35" r="17.3" fill="#f2f2f2"/>
<circle cx="1126" cy="35" r="15.7" fill="#505050"/>
<circle cx="1126" cy="35" r="15" fill="#ecb80c"/>
<text x="1126.5" y="43.2" text-anchor="middle" font-family="Liberation Serif" font-weight="bold" font-size="19" stroke="#000" stroke-width="0.3" fill="#000">5</text>
</svg>
</body></html>
